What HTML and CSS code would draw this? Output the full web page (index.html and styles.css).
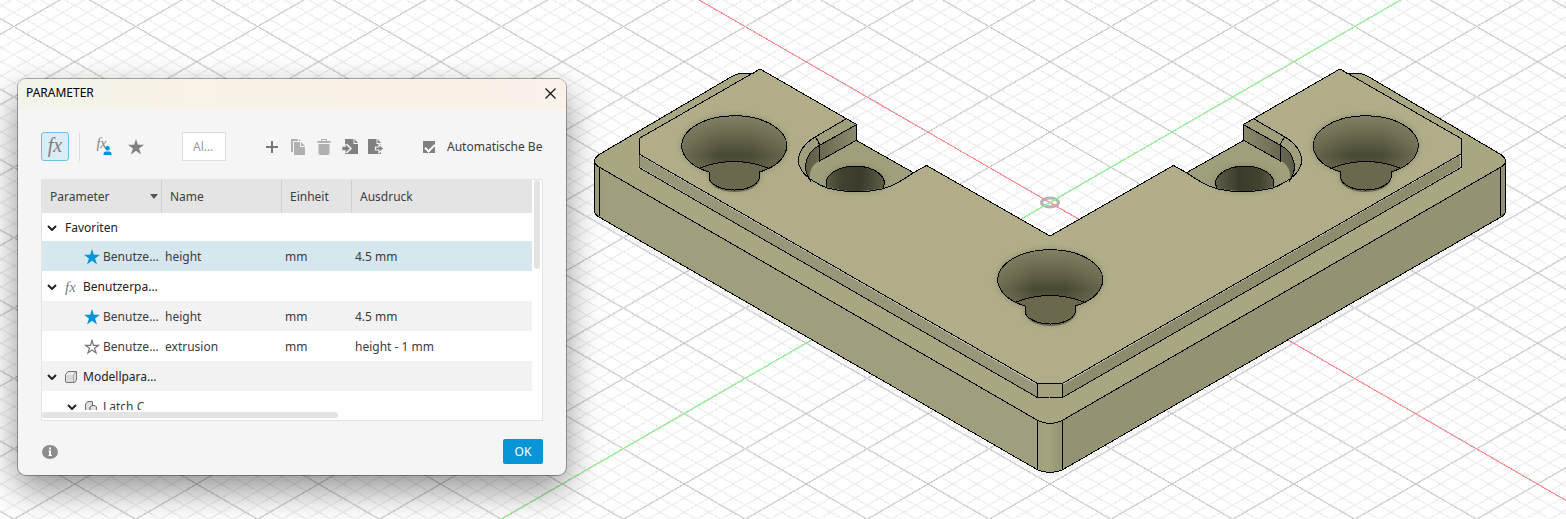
FILE: index.html
```html
<!DOCTYPE html>
<html lang="de">
<head>
<meta charset="utf-8">
<title>Parameter</title>
<link rel="stylesheet" href="styles.css">
</head>
<body>
<main class="viewport">
  <svg class="scene" viewBox="0 0 1566 519" preserveAspectRatio="xMinYMin slice" role="img" aria-label="3D-Modell">
    <defs>
      <pattern id="minor" patternUnits="userSpaceOnUse" x="1050" y="202.5" width="24.38" height="14.076">
        <path class="grid-minor" d="M-24.38-14.076 48.76 28.152M-24.38 28.152 48.76-14.076"/>
      </pattern>
      <pattern id="major" patternUnits="userSpaceOnUse" x="1050" y="202.5" width="121.9" height="70.38">
        <path class="grid-major" d="M-121.9-70.38 243.8 140.76M-121.9 140.76 243.8-70.38"/>
      </pattern>
      <linearGradient id="bowl" x1="0" y1="0" x2="0" y2="1">
        <stop offset="0" stop-color="#838163"/>
        <stop offset=".35" stop-color="#68674d"/>
        <stop offset=".7" stop-color="#4a4a34"/>
        <stop offset="1" stop-color="#5d5c43"/>
      </linearGradient>
      <linearGradient id="bowlSides" x1="0" y1="0" x2="1" y2="0">
        <stop offset="0" stop-color="#8b896a" stop-opacity=".55"/>
        <stop offset=".35" stop-color="#8b896a" stop-opacity="0"/>
        <stop offset=".65" stop-color="#8b896a" stop-opacity="0"/>
        <stop offset="1" stop-color="#8b896a" stop-opacity=".45"/>
      </linearGradient>
      <linearGradient id="bore" x1="0" y1="0" x2="1" y2="0">
        <stop offset="0" stop-color="#5d5c43"/>
        <stop offset=".25" stop-color="#42422f"/>
        <stop offset=".6" stop-color="#3b3b2d"/>
        <stop offset="1" stop-color="#5f5e46"/>
      </linearGradient>
      <linearGradient id="corner" x1="0" y1="0" x2="1" y2="0">
        <stop offset="0" stop-color="#9f9f7d"/>
        <stop offset=".4" stop-color="#a5a480"/>
        <stop offset="1" stop-color="#949372"/>
      </linearGradient>
      <linearGradient id="wall" x1="0" y1="0" x2="1" y2="0">
        <stop offset="0" stop-color="#5d5c45"/>
        <stop offset="1" stop-color="#8a896b"/>
      </linearGradient>
      <filter id="soft" x="-20%" y="-20%" width="140%" height="140%"><feGaussianBlur stdDeviation="3"/></filter>
      <g id="hole">
        <path class="glow" d="M-25 26A52.500 30 0 1 1 25.500 26V32A25.500 14 0 0 1-25 32Z"/>
        <path fill="url(#bowl)" d="M-25 26A52.500 30 0 1 1 25.500 26Z"/>
        <path fill="url(#bowlSides)" d="M-25 26A52.500 30 0 1 1 25.500 26Z"/>
        <path fill="#6a694e" d="M-34 22Q0 9 34 22L26 26V32A25.500 14 0 0 1-25 32V26Z"/>
        <path class="edge" d="M-25 26A52.500 30 0 1 1 25.500 26V32A25.500 14 0 0 1-25 32ZM-34 22Q0 9 34 22" />
        <path stroke="#6a694e" stroke-width="2" d="M-24 26H25"/>
      </g>
      <g id="arm">
        <path fill="#a9a782" d="M594.500 161Q595 157 600 154L731 77Q737 73 741 73H754L639 138V168L1037 390H1050V424Q1042 423 1037 420L599 167Q594 164 594.500 161Z"/>
        <path fill="#b0ad88" d="M760 69 856 124V140L914 173 926 165 1050 236V384H1037L639 154V138Z"/>
        <path fill="#a3a17e" d="M1037 384H1051V398H1037Z"/>
        <path fill="#a09f7b" d="M846 119 856 124V140L914 173Q895 186 882 189Q855 195 827 188Q798 176 798.500 160Q799 147 815 137Z"/>
        <path fill="url(#wall)" d="M856 125V140L819 161Q808 167 810 181Q804 171 806 163Q808 151 820 145Z"/>
        <path class="glow" d="M827 187A29 17 0 1 1 883 188Q855 195 827 187Z"/>
        <path fill="url(#bore)" d="M827 187A29 17 0 1 1 883 188Q855 195 827 187Z"/>
        <path class="edge" d="M827 187A29 17 0 1 1 883 188"/>
        <path class="edge" d="M594.500 161Q595 157 600 154L731 77Q737 73.500 741 73.500H754M594.500 161V211Q595 215 599 217L1037 469.500Q1042 472 1050 472.500M594.500 161Q594 164 599 167L1037 420Q1042 423 1050 423.500M599.500 167V216M1037.500 420V469"/>
        <path class="edge" d="M760 69 639 138.500V167.500L1037.500 397.500H1050M639 154 1037.500 383.500H1050M1037.500 383.500V397.500M759 69.500H761L856.500 124.500V140.500L914 173M1050 236 926.500 165.500 913 173Q895 186 882 189Q855 195 827 188Q798 176 798.500 160Q799 147 815 137L846 119M856 125 820 145Q808 151 806 163Q804 171 811 182M815 137Q819 141 819.500 146V161L856 140.500"/>
        <use href="#hole" x="734" y="146"/>
      </g>
    </defs>
    <rect width="1566" height="519" fill="url(#minor)"/>
    <rect width="1566" height="519" fill="url(#major)"/>
    <path class="axis-x" d="M699 0 1566 500.500"/>
    <path class="axis-y" d="M1400.500 0 501 519"/>
    <path class="ground" d="M596 212 1050 474 1504 212V218L1050 479 596 218Z"/>
    <path fill="#9f9f7e" d="M594.500 161V211Q595 215 599 217L1037 469H1050V400Z"/>
    <path fill="#939272" d="M1505.500 161V211Q1505 215 1501 217L1063 469H1050V400Z"/>
    <path fill="url(#corner)" d="M1037 420Q1050 427 1063 420V469Q1050 476 1037 469Z"/>
    <use href="#arm"/>
    <use href="#arm" transform="matrix(-1 0 0 1 2100 0)"/>
    <path fill="#98977a" d="M639.500 155 1037 384.500V396.500L639.500 167Z"/>
    <path fill="#8d8c6c" d="M1460.500 155 1063 384.500V396.500L1460.500 167Z"/>
    <use href="#hole" x="1050" y="280"/>
    <ellipse class="origin" cx="1050" cy="202.500" rx="8.500" ry="4.500"/>
    <path class="axis-x" d="M1042 198 1058 207"/>
    <path class="axis-y" d="M1042 207 1058 198"/>
  </svg>

  <section class="dialog" role="dialog" aria-labelledby="dialog-title">
    <header class="titlebar">
      <h1 class="title" id="dialog-title">PARAMETER</h1>
      <button class="close" type="button" aria-label="Schließen">
        <svg width="11" height="11" viewBox="0 0 11 11"><path d="M.5.500 10.500 10.500M10.500.500.500 10.500" stroke="#111" stroke-width="1.200"/></svg>
      </button>
    </header>

    <div class="content">
      <div class="toolbar">
        <button class="tool tool-active" type="button" aria-label="Alle Parameter"><span class="fx fx-large">fx</span></button>
        <span class="divider"></span>
        <button class="tool tool-user" type="button" aria-label="Benutzerparameter">
          <span class="fx">fx</span>
          <svg class="user" width="9" height="9" viewBox="0 0 9 9"><circle cx="4.500" cy="2.300" r="2.300" fill="#0696d7"/><path d="M.5 9V7.800Q.5 5.500 3 5.500H6Q8.500 5.500 8.500 7.800V9Z" fill="#0696d7"/></svg>
        </button>
        <button class="tool" type="button" aria-label="Favoriten">
          <svg width="16" height="16" viewBox="0 0 16 16"><path fill="#808080" d="M8 0 9.900 5.800H16L11.100 9.400 13 15.500 8 11.800 3 15.500 4.900 9.400 0 5.800H6.100Z"/></svg>
        </button>
        <input class="filter" type="text" placeholder="Al…" aria-label="Filter">
        <div class="actions">
          <button class="action" type="button" aria-label="Hinzufügen">
            <svg width="16" height="16" viewBox="0 0 16 16"><path d="M8 2V14M2 8H14" stroke="#777" stroke-width="2"/></svg>
          </button>
          <button class="action" type="button" aria-label="Kopieren">
            <svg width="16" height="16" viewBox="0 0 16 16"><path fill="#b0b0b0" d="M1 0H8V2H3V13H1ZM9 0 11 2H9ZM4 3H10V8H15V16H4ZM11 3 15 7H11Z"/></svg>
          </button>
          <button class="action" type="button" aria-label="Löschen">
            <svg width="16" height="16" viewBox="0 0 16 16"><path fill="#b0b0b0" d="M5 0H11V2H14.500V4H1.500V2H5ZM6 1V2H10V1ZM2.500 5H13.500V14Q13.500 16 11.500 16H4.500Q2.500 16 2.500 14Z"/></svg>
          </button>
          <button class="action" type="button" aria-label="Importieren">
            <svg width="16" height="16" viewBox="0 0 16 16"><path fill="#808080" d="M3 0H11.500V5H16V15H3Z"/><path fill="#808080" d="M12.500 0 16 4H12.500Z"/><path d="M4.500 5 9 9.500 4.500 14" fill="none" stroke="#f5f5f5" stroke-width="1.500"/><path fill="#808080" stroke="#f5f5f5" stroke-width=".6" d="M0 7.500H3.500V5L8 9.500 3.500 14V11.500H0Z"/></svg>
          </button>
          <button class="action" type="button" aria-label="Exportieren">
            <svg width="16" height="16" viewBox="0 0 16 16"><path fill="#808080" d="M0 0H8.500V5H13V15H0ZM9.500 0 13 4H9.500Z"/><path fill="#808080" stroke="#f5f5f5" stroke-width="1.200" d="M7.500 8H11V5L16 9.500 11 14V11H7.500Z"/></svg>
          </button>
        </div>
        <label class="auto"><input class="check" type="checkbox" checked><span class="auto-text">Automatische Berechnung</span></label>
      </div>

      <div class="panel">
        <div class="clip">
          <table class="params">
            <colgroup><col class="col-wide"><col class="col-wide"><col class="col-unit"><col></colgroup>
            <thead>
              <tr><th scope="col"><span class="sort">Parameter<svg width="8" height="5" viewBox="0 0 8 5"><path fill="#555" d="M0 0H8L4 5Z"/></svg></span></th><th scope="col">Name</th><th scope="col">Einheit</th><th scope="col">Ausdruck</th></tr>
            </thead>
            <tbody>
              <tr class="first"><td colspan="4"><span class="group"><svg class="chev" viewBox="0 0 10 6"><path d="M1 1 5 5 9 1"/></svg>Favoriten</span></td></tr>
              <tr class="selected"><td><span class="leaf"><svg width="16" height="16" viewBox="0 0 16 16"><path fill="#0696d7" d="M8 0 9.900 5.800H16L11.100 9.400 13 15.500 8 11.800 3 15.500 4.900 9.400 0 5.800H6.100Z"/></svg>Benutze…</span></td><td>height</td><td>mm</td><td>4.5 mm</td></tr>
              <tr><td colspan="4"><span class="group"><svg class="chev" viewBox="0 0 10 6"><path d="M1 1 5 5 9 1"/></svg><span class="fx fx-row">fx</span>Benutzerpa…</span></td></tr>
              <tr class="alt"><td><span class="leaf"><svg width="16" height="16" viewBox="0 0 16 16"><path fill="#0696d7" d="M8 0 9.900 5.800H16L11.100 9.400 13 15.500 8 11.800 3 15.500 4.900 9.400 0 5.800H6.100Z"/></svg>Benutze…</span></td><td>height</td><td>mm</td><td>4.5 mm</td></tr>
              <tr><td><span class="leaf"><svg width="16" height="16" viewBox="0 0 16 16"><path fill="none" stroke="#777" stroke-width="1.200" d="M8 1.500 9.500 6.300H14.500L10.500 9.200 12.100 14 8 11 3.900 14 5.500 9.200 1.500 6.300H6.500Z"/></svg>Benutze…</span></td><td>extrusion</td><td>mm</td><td>height - 1 mm</td></tr>
              <tr class="alt"><td colspan="4"><span class="group"><svg class="chev" viewBox="0 0 10 6"><path d="M1 1 5 5 9 1"/></svg><svg class="kind" width="12" height="12" viewBox="0 0 12 12"><path d="M.6 3.500 3 .6H11.400V9L9.500 11.400H2Q.6 11.400.6 10Z" fill="#f4f4f6" stroke="#666"/><path d="M1.500 3.800H8.500V11H1.500Z" fill="#d9dae0"/><path d="M8.800 11V3.500L11 1" stroke="#999" fill="none"/></svg>Modellpara…</span></td></tr>
              <tr><td colspan="4"><span class="group nested"><svg class="chev" viewBox="0 0 10 6"><path d="M1 1 5 5 9 1"/></svg><svg class="kind" width="12" height="12" viewBox="0 0 12 12"><path d="M.6 11.400V3L2.500.6H7.400V4.500L5 6V11.400Z" fill="#e4e5e9" stroke="#666"/><path d="M5 11.400V6.500L7 4.500H10L11.400 6V11.400Z" fill="#e4e5e9" stroke="#666"/></svg>Latch C</span></td></tr>
            </tbody>
          </table>
        </div>
        <span class="bar bar-y"></span>
        <span class="bar bar-x"></span>
      </div>

      <footer class="footer">
        <button class="info" type="button" aria-label="Info">
          <svg width="16" height="14" viewBox="0 0 16 14"><ellipse cx="8" cy="7" rx="8" ry="7" fill="#8c8c8c"/><path d="M7 2.500H9V4.500H7ZM6.500 5.500H9V10H10V11H6.500V10H7V6.500H6.500Z" fill="#fff"/></svg>
        </button>
        <button class="ok" type="button">OK</button>
      </footer>
    </div>
  </section>
</main>
</body>
</html>
```
FILE: styles.css
```css
* { box-sizing: border-box; }
body {
  margin: 0;
  font: 12px/16px "Noto Sans", "Open Sans", sans-serif;
  color: #3c3c3c;
}
button { padding: 0; border: 0; background: none; font: inherit; color: inherit; }
svg { flex: none; }

.viewport { position: relative; min-height: 100vh; overflow: hidden; background: #fff; }
.scene { position: absolute; inset: 0; width: 100%; height: 100%; }
.grid-minor, .grid-major, .axis-x, .axis-y { fill: none; stroke-width: 1; shape-rendering: crispEdges; }
.grid-minor { stroke: #ececec; }
.grid-major { stroke: #c8c8c8; }
.axis-x { stroke: #ff8c8c; }
.axis-y { stroke: #8cf58c; }
.edge { fill: none; stroke: #000; stroke-width: 1; shape-rendering: crispEdges; }
.glow { fill: #6d6c50; opacity: .6; filter: url(#soft); }
.ground { fill: #000; opacity: .08; filter: url(#soft); }
.origin { fill: none; stroke: #b4b4b4; stroke-width: 3; }

/* Floating window over the canvas */
.dialog {
  position: absolute;
  left: 18px;
  top: 79px;
  width: 548px;
  border-radius: 8px;
  overflow: hidden;
  background: #f5f5f5;
  box-shadow: 0 0 0 1px rgba(0, 0, 0, .3), 0 14px 36px rgba(0, 0, 0, .45);
}
.titlebar {
  display: flex;
  align-items: center;
  justify-content: space-between;
  height: 30px;
  padding: 0 10px 2px 8px;
  background: linear-gradient(90deg, #f2f4ea, #f9f2e6 30%, #faf1e8);
}
.title { margin: 0; font-size: 12px; font-weight: 400; color: #000; }
.close { display: flex; }
.content { padding: 23px 23px 11px; }

.toolbar { display: flex; align-items: center; height: 29px; overflow: hidden; }
.tool {
  flex: none;
  display: flex;
  align-items: center;
  justify-content: center;
  width: 28px;
  height: 28px;
  margin-right: 4px;
}
.tool-active {
  height: 29px;
  margin-right: 10px;
  border: 1px solid #6fbfe4;
  border-radius: 3px;
  background: #dcecf5;
}
.fx { font: italic 14px/16px "Liberation Serif", serif; color: #808080; }
.fx-large { padding-bottom: 3px; font-size: 20px; }
.fx-row { width: 18px; font-size: 15px; }
.divider { flex: none; width: 1px; height: 28px; margin-right: 10px; background: #ddd; }
.tool-user { position: relative; }
.tool-user .fx { padding: 0 5px 5px 0; }
.user { position: absolute; right: 6px; bottom: 6px; }
.filter {
  flex: none;
  width: 44px;
  height: 29px;
  margin: 0 33px 0 28px;
  padding: 0 10px;
  border: 1px solid #ddd;
  background: #fff;
  font: inherit;
}
.filter::placeholder { color: #999; opacity: 1; }
.actions { flex: none; display: flex; margin-right: 34px; }
.action { display: flex; justify-content: center; width: 26px; }
.auto { display: flex; align-items: center; gap: 12px; min-width: 0; }
.auto-text { white-space: nowrap; overflow: hidden; }
.check {
  appearance: none;
  flex: none;
  width: 12px;
  height: 12px;
  margin: 0;
  background: #808080;
}
.check:checked::after {
  content: "";
  display: block;
  width: 8px;
  height: 4px;
  margin: 3px 2px;
  border: solid #fff;
  border-width: 0 0 2px 2px;
  transform: rotate(-45deg);
}

.panel {
  display: grid;
  grid-template: 230px 10px / 1fr 10px;
  margin: 18px 0;
  border: 1px solid #e4e4e4;
  background: #fff;
}
.clip { overflow: hidden; }
.params { width: 100%; table-layout: fixed; border-collapse: separate; border-spacing: 0; }
.col-wide { width: 120px; }
.col-unit { width: 70px; }
.params th {
  height: 33px;
  padding: 0 8px;
  border-right: 1px solid #d0d0d0;
  background: #e4e4e4;
  font-weight: 400;
  text-align: left;
}
.params th:last-child { border-right: 0; }
.sort { display: flex; align-items: center; justify-content: space-between; margin-right: -5px; }
.params td { height: 30px; padding: 2px 0 0 3px; white-space: nowrap; }
.params .first td { height: 28px; }
.params .selected { background: #d6e7ee; }
.params .alt { background: #f2f2f2; }
.group { display: flex; align-items: center; padding-left: 2px; color: #222; }
.nested { padding-left: 22px; color: #3c3c3c; }
.chev { width: 10px; height: 6px; margin-right: 8px; fill: none; stroke: #222; stroke-width: 2; }
.kind { margin-right: 6px; }
.leaf { display: flex; align-items: center; gap: 3px; padding-left: 39px; }
.bar { border-radius: 3px; background: #e3e3e3; }
.bar-y { width: 6px; height: 89px; margin-left: 2px; }
.bar-x { width: 296px; height: 6px; margin-top: 2px; }

.footer { display: flex; align-items: center; justify-content: space-between; }
.info { display: flex; padding: 0 1px; }
.ok { width: 40px; height: 25px; border-radius: 2px; background: #0696d7; color: #fff; }
```
